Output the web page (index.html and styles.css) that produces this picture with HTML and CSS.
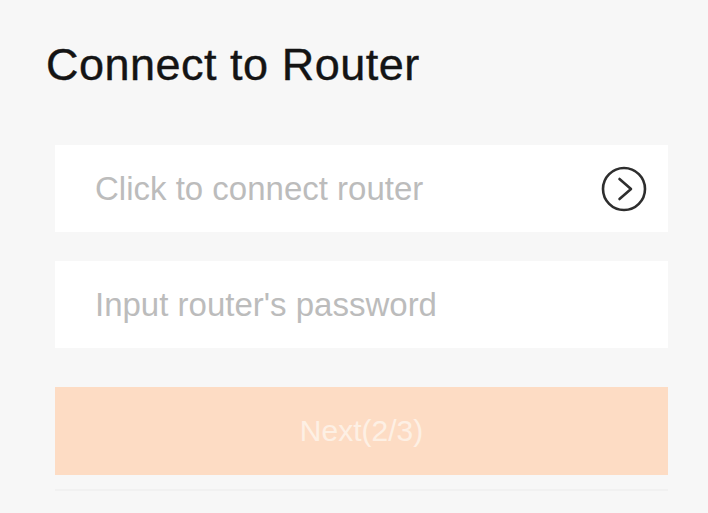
FILE: index.html
```html
<!DOCTYPE html>
<html>
<head>
<meta charset="utf-8">
<link rel="stylesheet" href="styles.css">
</head>
<body>
<div class="page">
  <h1 class="title">Connect to Router</h1>
  <div class="form">
    <div class="field">
      <span class="placeholder">Click to connect router</span>
      <svg class="arrow" width="48" height="48" viewBox="0 0 48 48">
        <circle cx="24" cy="24" r="21" fill="none" stroke="#2e2e2e" stroke-width="2.6"/>
        <path d="M19.5 14 L31 24 L19.5 34" fill="none" stroke="#2e2e2e" stroke-width="2.6" stroke-linecap="round" stroke-linejoin="round"/>
      </svg>
    </div>
    <div class="field">
      <span class="placeholder">Input router's password</span>
    </div>
    <div class="button">Next(2/3)</div>
    <div class="divider"></div>
  </div>
</div>
</body>
</html>
```
FILE: styles.css
```css
html, body {
  margin: 0;
  padding: 0;
  background: #f7f7f7;
  font-family: "Liberation Sans", Arial, sans-serif;
}
.page {
  width: 708px;
  height: 513px;
  overflow: hidden;
  padding-top: 42px;
  box-sizing: border-box;
}
.title {
  margin: 0 0 0 46px;
  font-size: 45px;
  line-height: 46px;
  font-weight: 400;
  color: #141414;
  letter-spacing: 0.5px;
  -webkit-text-stroke: 0.4px #141414;
}
.form {
  margin: 57px 40px 0 55px;
  display: flex;
  flex-direction: column;
}
.field {
  height: 87px;
  background: #fff;
  display: flex;
  align-items: center;
  justify-content: space-between;
  padding: 0 20px 0 40px;
  margin-bottom: 29px;
}
.placeholder {
  font-size: 33px;
  color: #bcbcbc;
}
.arrow {
  display: block;
}
.button {
  margin-top: 10px;
  height: 88px;
  background: #fddcc4;
  color: #fdf0e4;
  font-size: 30px;
  display: flex;
  align-items: center;
  justify-content: center;
}
.divider {
  margin-top: 14px;
  height: 2px;
  background: #f1f1f1;
}
```
